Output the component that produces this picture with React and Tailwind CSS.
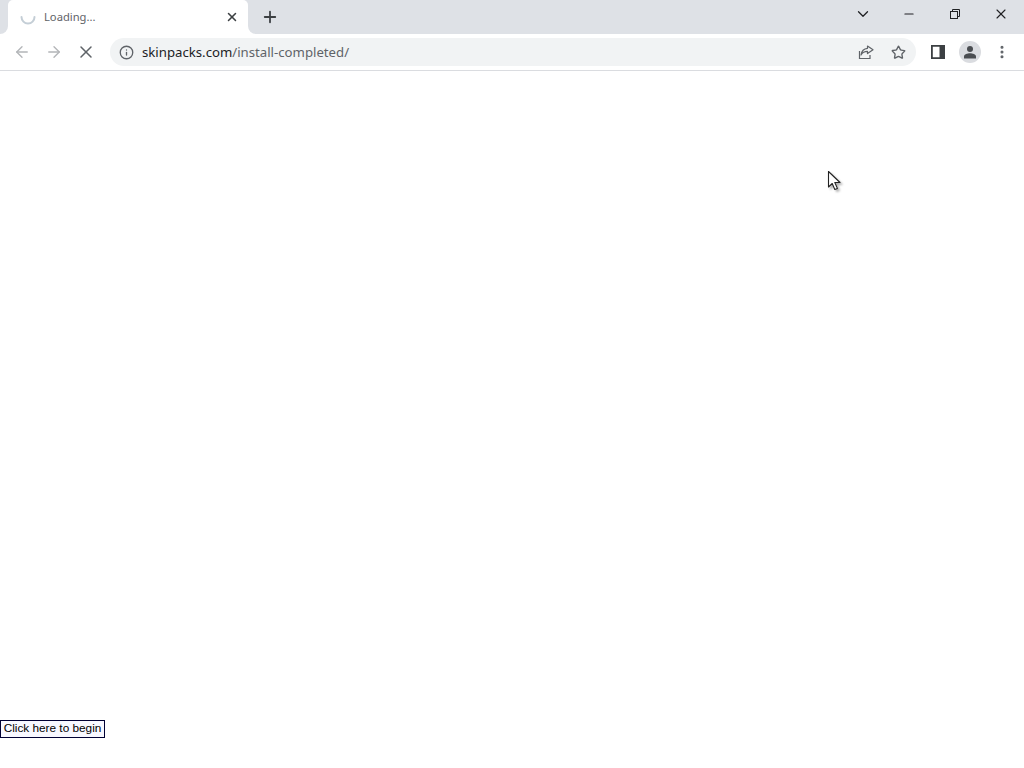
import { ArrowLeft, ArrowRight, X, Plus, Info, Star, ChevronDown, Minus, MoreVertical } from 'lucide-react'

function ShareIcon() {
  return (
    <svg width="16" height="16" viewBox="0 0 16 16" fill="none" stroke="#5f6368" strokeWidth="1.2">
      <path d="M1.5 7v7.5h10.5V11" />
      <path d="M9.5 2l5.5 3.8-5.5 3.8V7.4c-3 0-5 1-6.5 3.6C3.5 7.5 5.8 4.6 9.5 4.3z" strokeLinejoin="round" />
    </svg>
  )
}

function SidePanelIcon() {
  return (
    <svg width="14" height="14" viewBox="0 0 14 14">
      <path fillRule="evenodd" d="M0 0h14v14H0zM1.8 1.8v10.4h6.7V1.8z" fill="#3c4043" />
    </svg>
  )
}

function ProfileIcon() {
  return (
    <div className="w-[22px] h-[22px] rounded-full bg-[#dadce0] flex items-center justify-center">
      <svg width="14" height="14" viewBox="0 0 14 14" fill="#4a4d51">
        <circle cx="7" cy="4" r="3" />
        <path d="M1 13.5v-2.2C1 9.3 4.5 8.2 7 8.2s6 1.1 6 3.1v2.2z" />
      </svg>
    </div>
  )
}

function RestoreIcon() {
  return (
    <svg width="10" height="10" viewBox="0 0 10 10" fill="none" stroke="#202124" strokeWidth="1">
      <rect x="0.5" y="2.5" width="7" height="7" />
      <path d="M2.5 2.5v-2h7v7h-2" />
    </svg>
  )
}

function Spinner() {
  return (
    <svg width="16" height="16" viewBox="0 0 16 16" fill="none" stroke="#c4ced6" strokeWidth="2" strokeLinecap="round">
      <path d="M1.5 8a6.5 6.5 0 0 0 13 0" />
    </svg>
  )
}

function Cursor() {
  return (
    <svg width="16" height="22" viewBox="0 0 16 22" className="absolute left-[827px] top-[170px] drop-shadow-[2px_2px_1px_rgba(0,0,0,0.3)]">
      <path d="M1.5 1.5v15.5l3.7-3.5 2.6 6 2.6-1.1-2.6-5.9h5.2z" fill="#fff" stroke="#222" strokeWidth="1.1" strokeLinejoin="round" />
    </svg>
  )
}

export default function App() {
  return (
    <div className="relative h-[768px] w-[1024px] overflow-hidden bg-white flex flex-col font-['Noto_Sans',sans-serif]">
      {/* tab strip */}
      <div className="h-[34px] bg-white flex shrink-0">
        <div className="w-2 bg-[#dee1e6] rounded-br-lg" />
        <div className="w-[240px] bg-[#dee1e6]">
          <div className="h-full bg-white rounded-t-[5px] flex items-center pl-3 pr-[9px]">
            <Spinner />
            <span className="ml-2 text-[11.2px] text-[#5f6368] flex-1">Loading...</span>
            <X size={14} strokeWidth={2.6} className="text-[#3c4043]" />
          </div>
        </div>
        <div className="flex-1 bg-[#dee1e6] rounded-bl-lg flex">
          <div className="h-[34px] ml-[13px] flex items-center">
            <Plus size={18} strokeWidth={2.4} className="text-[#3c4043]" />
          </div>
          <div className="flex-1" />
          <div className="h-[28px] flex items-center">
            <ChevronDown size={18} strokeWidth={1.7} className="text-[#202124] mr-[30px]" />
            <Minus size={14} strokeWidth={2} className="text-[#202124] mr-[34px]" />
            <RestoreIcon />
            <X size={16} strokeWidth={1.7} className="text-[#202124] ml-[33px] mr-[15px]" />
          </div>
        </div>
      </div>

      {/* toolbar */}
      <div className="h-[37px] bg-white border-b border-[#dadce0] flex items-center shrink-0">
        <ArrowLeft size={18} strokeWidth={1.8} className="ml-[13px] text-[#b3b5b8]" />
        <ArrowRight size={18} strokeWidth={1.8} className="ml-[14px] text-[#b3b5b8]" />
        <X size={20} strokeWidth={1.8} className="ml-[13px] text-[#5f6368]" />
        <div className="ml-[14px] w-[806px] h-[28px] rounded-full bg-[#f1f3f4] flex items-center pl-[9px] pr-2.5">
          <Info size={15} strokeWidth={2.1} className="text-[#5f6368]" />
          <span className="ml-2 text-[13.2px] pt-px text-[#202124] flex-1">
            skinpacks.com<span className="text-[#5f6368]">/install-completed/</span>
          </span>
          <ShareIcon />
          <Star size={15} strokeWidth={2.2} className="ml-[17px] text-[#5f6368]" />
        </div>
        <div className="ml-[15px]">
          <SidePanelIcon />
        </div>
        <div className="ml-[14px]">
          <ProfileIcon />
        </div>
        <MoreVertical size={16} strokeWidth={2.6} className="ml-[13px] text-[#5f6368]" />
      </div>

      {/* page */}
      <div className="flex-1 flex flex-col justify-end items-start pb-[30px]">
        <button className="h-[18px] w-[105px] border border-[#000033] bg-[#f8f8ff] text-[11.8px] leading-none text-black whitespace-nowrap text-center font-['Liberation_Sans',sans-serif]">
          Click here to begin
        </button>
      </div>

      <Cursor />
    </div>
  )
}
